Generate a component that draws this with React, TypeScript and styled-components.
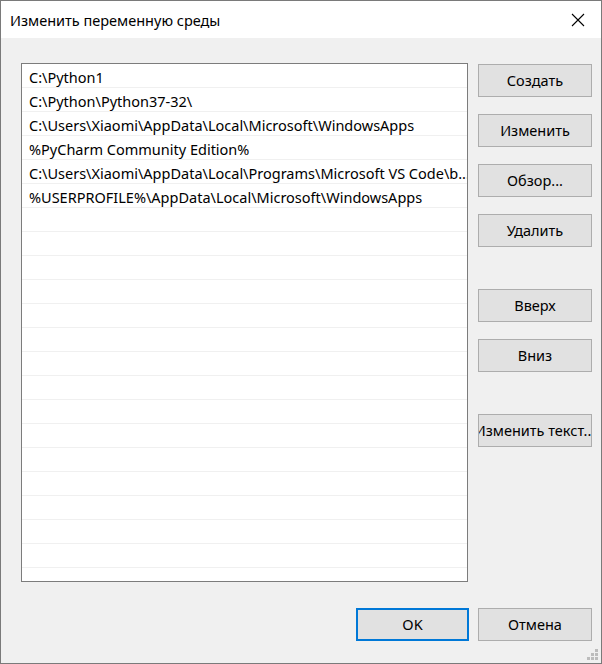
import React from 'react';
import styled, { createGlobalStyle } from 'styled-components';

const GlobalStyle = createGlobalStyle`
  html, body {
    margin: 0;
    padding: 0;
    background: #f0f0f0;
  }
  * {
    box-sizing: border-box;
  }
`;

const font = `"Noto Sans", "Open Sans", "Liberation Sans", sans-serif`;

const StyledWindow = styled.div`
  position: relative;
  width: 602px;
  height: 664px;
  display: flex;
  flex-direction: column;
  background: #f0f0f0;
  border: 1px solid #7a7a7a;
  font-family: ${font};
  font-size: 14.5px;
  color: #000;
`;

const StyledTitleBar = styled.div`
  height: 37px;
  flex: 0 0 37px;
  display: flex;
  align-items: center;
  justify-content: space-between;
  padding-left: 9px;
  background: #fff;
`;

const StyledClose = styled.div`
  width: 44px;
  height: 37px;
  display: flex;
  align-items: center;
  justify-content: center;
  margin-right: 1px;
`;

const StyledBody = styled.div`
  display: flex;
  gap: 10px;
  padding: 25px 9px 0 20px;
`;

const StyledList = styled.div`
  width: 447px;
  height: 519px;
  border: 1px solid #7c7c7c;
  background: #fff;
  overflow: hidden;
`;

const StyledRow = styled.div`
  height: 24px;
  display: flex;
  align-items: center;
  padding: 2px 4px 0 7px;
  border-bottom: 1px solid #f0f0f0;
  white-space: nowrap;
  overflow: hidden;
`;

const StyledButtons = styled.div`
  width: 114px;
  display: flex;
  flex-direction: column;
  padding-top: 1px;
`;

interface IButton {
  $gap?: number;
  $isDefault?: boolean;
}

const StyledButton = styled.div<IButton>`
  height: 33px;
  width: 114px;
  margin-top: ${(props) => props.$gap ?? 0}px;
  display: flex;
  align-items: center;
  justify-content: center;
  overflow: hidden;
  white-space: nowrap;
  background: #e1e1e1;
  border: ${(props) => (props.$isDefault ? '2px solid #0078d7' : '1px solid #adadad')};
  padding-bottom: 1px;
`;

const StyledFooter = styled.div`
  display: flex;
  justify-content: flex-end;
  gap: 9px;
  padding: 26px 9px 0 0;
`;

const StyledOkButton = styled(StyledButton)`
  width: 113px;
`;

const StyledGrip = styled.svg`
  position: absolute;
  right: 2px;
  bottom: 2px;
`;

const paths = [
  'C:\\Python1',
  'C:\\Python\\Python37-32\\',
  'C:\\Users\\Xiaomi\\AppData\\Local\\Microsoft\\WindowsApps',
  '%PyCharm Community Edition%',
  'C:\\Users\\Xiaomi\\AppData\\Local\\Programs\\Microsoft VS Code\\b...',
  '%USERPROFILE%\\AppData\\Local\\Microsoft\\WindowsApps',
];

const rows = [...paths, ...Array(16).fill('')];

const buttons = [
  { label: 'Создать', gap: 0 },
  { label: 'Изменить', gap: 17 },
  { label: 'Обзор...', gap: 17 },
  { label: 'Удалить', gap: 17 },
  { label: 'Вверх', gap: 42 },
  { label: 'Вниз', gap: 17 },
  { label: 'Изменить текст...', gap: 42 },
];

const CloseIcon = () => (
  <svg width="14" height="14" viewBox="0 0 14 14">
    <path d="M1 1 L13 13 M13 1 L1 13" stroke="#000" strokeWidth="1.1" fill="none" />
  </svg>
);

const Grip = () => (
  <StyledGrip width="12" height="12" viewBox="0 0 12 12">
    {[
      [8, 0],
      [4, 4],
      [8, 4],
      [0, 8],
      [4, 8],
      [8, 8],
    ].map(([x, y]) => (
      <rect key={`${x}-${y}`} x={x} y={y} width="3" height="3" fill="#bcbcbc" />
    ))}
  </StyledGrip>
);

export default function App() {
  return (
    <>
      <GlobalStyle />
      <StyledWindow>
        <StyledTitleBar>
          <span>Изменить переменную среды</span>
          <StyledClose>
            <CloseIcon />
          </StyledClose>
        </StyledTitleBar>
        <StyledBody>
          <StyledList>
            {rows.map((text, i) => (
              <StyledRow key={i}>{text}</StyledRow>
            ))}
          </StyledList>
          <StyledButtons>
            {buttons.map((b) => (
              <StyledButton key={b.label} $gap={b.gap}>
                <span>{b.label}</span>
              </StyledButton>
            ))}
          </StyledButtons>
        </StyledBody>
        <StyledFooter>
          <StyledOkButton $isDefault>OK</StyledOkButton>
          <StyledButton>Отмена</StyledButton>
        </StyledFooter>
        <Grip />
      </StyledWindow>
    </>
  );
}
